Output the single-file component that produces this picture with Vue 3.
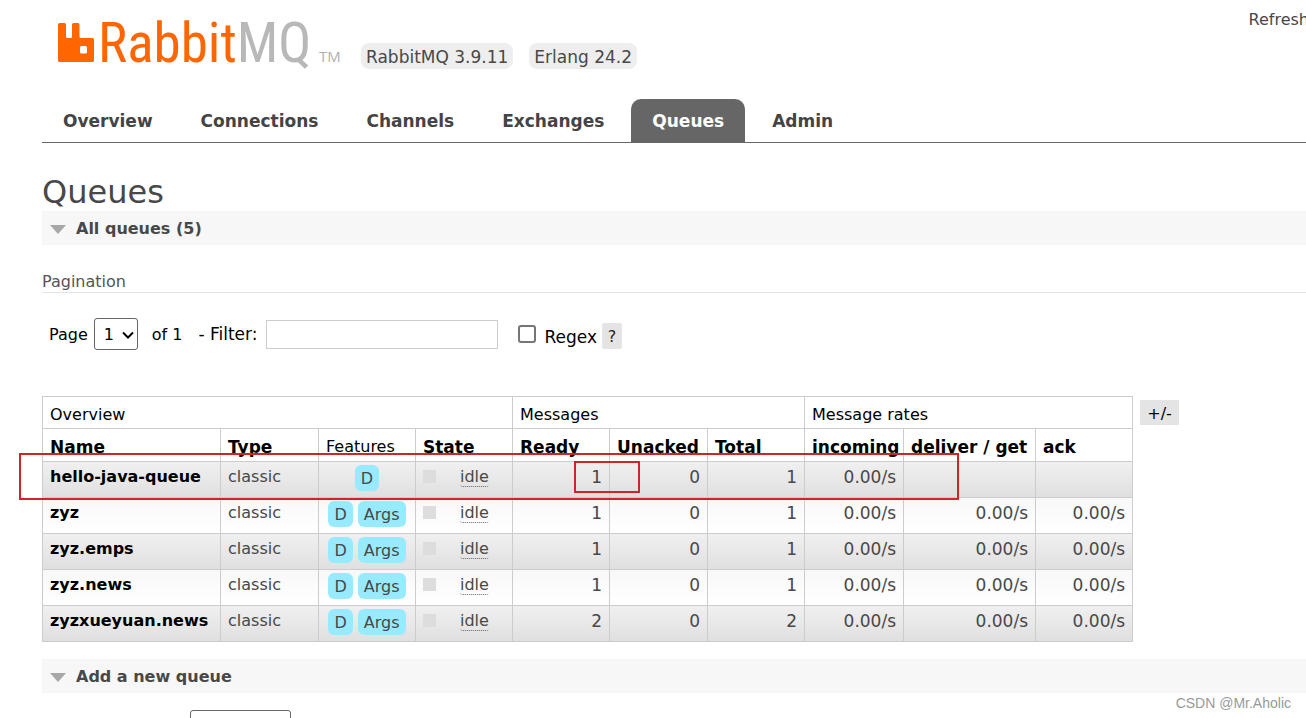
<script setup>
import { ref } from 'vue'

const tabs = ['Overview', 'Connections', 'Channels', 'Exchanges', 'Queues', 'Admin']
const active = ref('Queues')
const filter = ref('')
const regex = ref(false)

const widths = [178, 98, 97, 97, 97, 98, 97, 99, 132, 97]
const queues = [
  { name: 'hello-java-queue', tags: ['D'], ready: 1, unacked: 0, total: 1, incoming: '0.00/s', deliver: '', ack: '' },
  { name: 'zyz', tags: ['D', 'Args'], ready: 1, unacked: 0, total: 1, incoming: '0.00/s', deliver: '0.00/s', ack: '0.00/s' },
  { name: 'zyz.emps', tags: ['D', 'Args'], ready: 1, unacked: 0, total: 1, incoming: '0.00/s', deliver: '0.00/s', ack: '0.00/s' },
  { name: 'zyz.news', tags: ['D', 'Args'], ready: 1, unacked: 0, total: 1, incoming: '0.00/s', deliver: '0.00/s', ack: '0.00/s' },
  { name: 'zyzxueyuan.news', tags: ['D', 'Args'], ready: 2, unacked: 0, total: 2, incoming: '0.00/s', deliver: '0.00/s', ack: '0.00/s' },
]
</script>

<template>
  <div class="page">
    <header class="header">
      <a class="logo" href="#" aria-label="RabbitMQ">
        <svg class="mark" viewBox="0 0 36 39" aria-hidden="true">
          <path fill="#ff6600" fill-rule="evenodd" d="M1.500 0H6.500Q8 0 8 1.500V13.500Q8 15 9.500 15H12.500Q14 15 14 13.500V1.500Q14 0 15.500 0H20Q21.500 0 21.500 1.500V13.500Q21.500 15 23 15H34.500Q36 15 36 16.500V37.500Q36 39 34.500 39H1.500Q0 39 0 37.500V1.500Q0 0 1.500 0ZM23.500 23Q22 23 22 24.500V29Q22 30.500 23.500 30.500H27.500Q29 30.500 29 29V24.500Q29 23 27.500 23Z" />
        </svg>
        <span class="word">Rabbit<span class="mq">MQ</span></span>
        <span class="tm">TM</span>
      </a>
      <span class="version">RabbitMQ 3.9.11</span>
      <span class="version">Erlang 24.2</span>
      <span class="refresh">Refresh</span>
    </header>

    <nav class="tabs">
      <a v-for="t in tabs" :key="t" href="#" :class="{ selected: t === active }" @click.prevent="active = t">{{ t }}</a>
    </nav>

    <main>
      <h1>Queues</h1>
      <h2 class="section"><span class="arrow"></span>All queues (5)</h2>

      <h3>Pagination</h3>
      <form class="filters" @submit.prevent>
        <label class="page-label" for="page">Page</label>
        <span class="select-box">
          <select id="page"><option>1</option></select>
          <svg viewBox="0 0 12 8" aria-hidden="true"><path d="M1 1.500L6 6.500L11 1.500" fill="none" stroke="#000" stroke-width="2" /></svg>
        </span>
        <span class="of">of 1</span>
        <label class="filter-label" for="filter">- Filter:</label>
        <input id="filter" v-model="filter" class="text" type="text">
        <input id="regex" v-model="regex" class="check" type="checkbox">
        <label class="regex-label" for="regex">Regex</label>
        <button class="help" type="button">?</button>
      </form>

      <div class="queues">
        <table>
          <colgroup><col v-for="(w, i) in widths" :key="i" :style="{ width: w + 'px' }"></colgroup>
          <thead>
            <tr>
              <th class="plain" colspan="4">Overview</th>
              <th class="plain" colspan="3">Messages</th>
              <th class="plain" colspan="3">Message rates</th>
            </tr>
            <tr class="names">
              <th>Name</th><th>Type</th><th class="plain">Features</th><th>State</th>
              <th>Ready</th><th>Unacked</th><th>Total</th>
              <th>incoming</th><th>deliver / get</th><th>ack</th>
            </tr>
          </thead>
          <tbody>
            <tr v-for="q in queues" :key="q.name">
              <td><a href="#">{{ q.name }}</a></td>
              <td>classic</td>
              <td class="features"><div><span v-for="t in q.tags" :key="t" class="tag">{{ t }}</span></div></td>
              <td><div class="state"><i></i><span>idle</span></div></td>
              <td class="num">{{ q.ready }}</td>
              <td class="num">{{ q.unacked }}</td>
              <td class="num">{{ q.total }}</td>
              <td class="num">{{ q.incoming }}</td>
              <td class="num">{{ q.deliver }}</td>
              <td class="num">{{ q.ack }}</td>
            </tr>
          </tbody>
        </table>
        <button class="columns" type="button">+/-</button>
        <div class="mark-row"></div>
        <div class="mark-cell"></div>
      </div>

      <h2 class="section"><span class="arrow"></span>Add a new queue</h2>
      <form class="add" @submit.prevent>
        <select aria-label="Type"></select>
      </form>
    </main>
    <div class="watermark">CSDN @Mr.Aholic</div>
  </div>
</template>

<style>
body { margin: 0; background: #fff; }
</style>

<style scoped>
* { box-sizing: border-box; }
.page {
  position: relative;
  height: 100vh;
  overflow: hidden;
  padding-left: 42px;
  font: 16px/20px "DejaVu Sans", Verdana, sans-serif;
  color: #484848;
}
a { color: inherit; text-decoration: none; }
button, input, select { font: inherit; margin: 0; }

.header { display: flex; align-items: flex-start; height: 99px; padding-left: 16px; }
.logo { display: flex; width: 303px; flex: none; padding-top: 23px; white-space: nowrap; }
.mark { flex: none; width: 36px; height: 39px; }
.word {
  width: 219px;
  padding-left: 4px;
  font: 55px/40px "Liberation Sans Narrow", "Roboto Condensed", "Open Sans Condensed", sans-serif;
  color: #f60;
}
.mq { color: #b8b8b8; }
.tm { margin: 23px 0 0 6px; font: 15px/20px "Open Sans", sans-serif; color: #b0b0b0; }
.version {
  margin: 43px 16px 0 0;
  padding: 4px 5px 2px;
  border-radius: 8px;
  background: #eee;
  font-size: 17px;
  white-space: nowrap;
}
.refresh { margin: 10px -3px 0 auto; }

.tabs { display: flex; gap: 6px; border-bottom: 1px solid #666; }
.tabs a { padding: 12px 21px 11px; border-radius: 10px 10px 0 0; font-size: 17px; font-weight: bold; color: #444; }
.tabs a.selected { background: #666; color: #fff; }

h1 { margin: 30px 0 0; font-size: 32px; line-height: 38px; font-weight: normal; }
.section {
  display: flex;
  align-items: center;
  margin: 0;
  height: 34px;
  padding: 2px 0 0 8px;
  background: #f7f7f7;
  font-size: 16px;
  font-weight: bold;
}
.arrow { margin-right: 10px; border: 8px solid transparent; border-top: 9px solid #a8a8a8; border-bottom: 0; }
h3 { margin: 27px 0 0; border-bottom: 1px solid #e4e4e4; font-size: 16px; font-weight: normal; color: #555; }

.filters { display: flex; align-items: center; height: 32px; margin: 25px 0 46px 7px; color: #000; }
.page-label, .of { padding-top: 2px; }
.select-box { position: relative; margin: 0 14px 0 6px; }
.select-box select {
  display: block;
  width: 44px;
  height: 32px;
  padding: 2px 0 0 9px;
  border: 1px solid #666;
  border-radius: 3px;
  background: #fff;
  color: #000;
  appearance: none;
}
.select-box svg { position: absolute; right: 4px; top: 13px; width: 12px; height: 8px; pointer-events: none; }
.of { margin-right: 16px; }
.filter-label { margin-right: 8px; font-size: 17px; }
.text { width: 232px; height: 29px; border: 1px solid #ccc; background: #fff; }
.check {
  width: 18px;
  height: 18px;
  margin: 0 9px 0 20px;
  border: 2px solid #767676;
  border-radius: 3px;
  background: #fff;
  appearance: none;
}
.regex-label { margin: 5px 5px 0 0; font-size: 17px; }
.help { width: 20px; height: 26px; margin-top: 4px; padding: 2px 0 0; border: 0; border-radius: 2px; background: #e4e4e4; color: #222; }

.queues { position: relative; display: flex; align-items: flex-start; margin-bottom: 17px; }
table { width: 1091px; flex: none; table-layout: fixed; border-collapse: collapse; }
th, td { border: 1px solid #ccc; padding: 5px 7px 0; text-align: left; vertical-align: top; white-space: nowrap; line-height: 20px; }
th { height: 32px; padding-top: 8px; color: #000; font-size: 17px; }
th.plain { font-weight: normal; font-size: 16px; }
.names th { height: 33px; padding-top: 8px; }
td { height: 36px; }
td a { font-weight: bold; color: #000; }
tbody tr:nth-child(odd) { background: linear-gradient(#f0f0f0, #dfdfdf); }
tbody tr:nth-child(even) { background: linear-gradient(#f8f8f8, #fff); }
.num { text-align: right; font-size: 17px; }
.features { padding: 3px 0 0; }
.features div { display: flex; justify-content: center; gap: 5px; }
.tag { padding: 4px 6px 2px; border-radius: 6px; background: #98ebff; line-height: 20px; }
.state { display: flex; }
.state i { width: 13px; height: 13px; margin: 3px 24px 0 0; background: #ddd; }
.state span { height: 20px; border-bottom: 1px dotted #666; border-radius: 3px; }
.columns { width: 39px; height: 25px; margin: 4px 0 0 7px; padding: 2px 0 0; border: 0; background: #e4e4e4; color: #000; }
.mark-row, .mark-cell { position: absolute; border: 2px solid #d2232a; pointer-events: none; }
.mark-row { left: -23px; top: 57px; width: 940px; height: 47px; }
.mark-cell { left: 532px; top: 65px; width: 66px; height: 32px; }

.add { padding: 17px 0 0 148px; }
.add select { display: block; width: 101px; height: 32px; border: 1px solid #666; border-radius: 3px; background: #fff; appearance: none; }
.watermark { position: absolute; right: 15px; bottom: 5px; font: 14px/20px "Liberation Sans", sans-serif; color: #999; }
</style>
